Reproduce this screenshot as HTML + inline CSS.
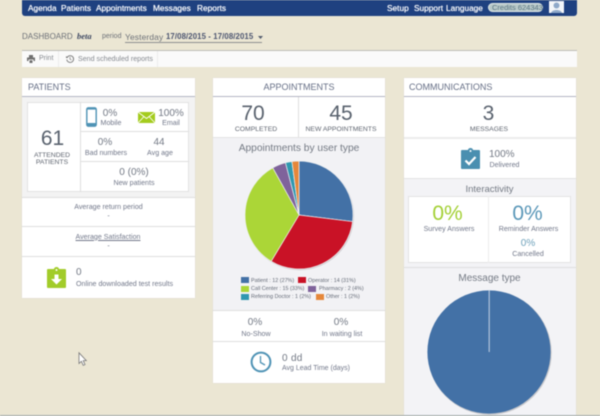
<!DOCTYPE html>
<html><head><meta charset="utf-8"><style>
html,body{margin:0;padding:0;width:600px;height:416px;overflow:hidden;background:#ebe6d3}
#r{position:relative;width:600px;height:416px;overflow:hidden;background:#ebe6d3;font-family:"Liberation Sans",Arial,sans-serif;color:#72788a;filter:blur(.42px)}
.t{position:absolute;line-height:0;white-space:nowrap;font-size:7.1px;margin-top:1.2px}
.c{transform:translateX(-50%)}
.b{position:absolute;box-sizing:border-box}
.n{color:#fff;font-size:8.3px;text-shadow:0 0 .6px #fff;top:7px}
.h{font-size:9px;color:#666f86;top:86px}
.p{background:#fff;position:absolute;box-shadow:0 0 1px #cfcfcf}
.l{position:absolute;height:1px;background:#dfdfdf}
.v{position:absolute;width:1px;background:#dfdfdf}
.big{font-size:21px;color:#59626e}
.m{font-size:10px;color:#737985}
.up{font-size:6.8px;color:#5f6570}
.s{position:absolute;width:8px;height:6px}
.g{font-size:5.4px;color:#666c78}
svg{position:absolute;overflow:visible}
</style></head><body><div id="r">

<div class="b" style="left:22px;top:0;width:555px;height:16px;background:#1f4180;border-radius:0 0 3px 3px"></div>
<span class="t n" style="left:28px">Agenda</span>
<span class="t n" style="left:61px">Patients</span>
<span class="t n" style="left:96px">Appointments</span>
<span class="t n" style="left:153px">Messages</span>
<span class="t n" style="left:197px">Reports</span>
<span class="t n" style="left:387px">Setup</span>
<span class="t n" style="left:414px">Support</span>
<span class="t n" style="left:446px">Language</span>
<div class="b" style="left:488px;top:3px;width:55px;height:9px;border-radius:5px;background:#b9c9c9;border:1px solid #dfe7e7"></div>
<span class="t" style="left:492px;top:6.5px;font-size:7.5px;color:#5b7784">Credits 624343</span>
<div class="b" style="left:549px;top:1px;width:15px;height:12px;background:#f4f6f9;overflow:hidden">
<svg width="15" height="12" style="left:0;top:0"><circle cx="7.5" cy="4.5" r="3" fill="#8fa9c9"/><path d="M2 12 C3 8 12 8 13 12Z" fill="#8fa9c9"/></svg></div>

<span class="t" style="left:22px;top:35.5px;font-size:8px;color:#6d7178">DASHBOARD</span>
<span class="t" style="left:77px;top:34.5px;font-size:8.5px;font-family:'Liberation Serif',serif;font-style:italic;font-weight:bold;color:#3c4660">beta</span>
<span class="t" style="left:102px;top:36px;font-size:7px;color:#6d7178">period</span>
<span class="t" style="left:125px;top:36px;font-size:8.4px;color:#6d7178;letter-spacing:.15px">Yesterday</span>
<span class="t" style="left:166px;top:35.5px;font-size:7.8px;font-weight:bold;color:#4c5570;letter-spacing:.1px">17/08/2015 - 17/08/2015</span>
<svg style="left:258px;top:36px" width="5" height="3"><path d="M0 0H5L2.5 3Z" fill="#555e70"/></svg>
<div class="b" style="left:125px;top:42px;width:137px;height:1px;background:#8d8f90"></div>

<div class="b" style="left:22px;top:50px;width:555px;height:17px;background:#fafafa;border-top:1px solid #bdbdb8"></div>
<div class="v" style="left:58px;top:51px;height:16px;background:#ececec"></div>
<div class="v" style="left:157px;top:51px;height:16px;background:#ececec"></div>
<svg style="left:27px;top:54.5px" width="8" height="8"><path d="M2 0H6V2.5H2ZM0 2.5H8V6H6.5V4.5H1.5V6H0ZM2.5 5.2H5.5V8H2.5Z" fill="#707070"/></svg>
<span class="t" style="left:39px;top:57.5px;font-size:7px;color:#868a90">Print</span>
<svg style="left:66px;top:54.5px" width="8" height="8"><path d="M1.2 2.4A3.4 3.4 0 1 1 .8 4.5" fill="none" stroke="#777" stroke-width=".9"/><path d="M4 2V4.2L5.5 5" fill="none" stroke="#777" stroke-width=".7"/><path d="M0 1V3H2Z" fill="#777"/></svg>
<span class="t" style="left:78px;top:57.5px;font-size:7.1px;color:#868a90">Send scheduled reports</span>

<!-- PATIENTS -->
<div class="p" style="left:22px;top:78px;width:173px;height:220px"></div>
<span class="t h" style="left:28px">PATIENTS</span>
<div class="l" style="left:22px;top:96px;width:173px;background:#b4b6c4"></div>
<div class="b" style="left:22px;top:97px;width:173px;height:100px;background:#f3f3f3"></div>
<div class="b" style="left:27px;top:102px;width:162px;height:90px;background:#fff;border:1px solid #e2e2e2"></div>
<div class="v" style="left:80px;top:102px;height:90px"></div>
<div class="l" style="left:80px;top:131px;width:109px"></div>
<div class="l" style="left:80px;top:161px;width:109px"></div>
<div class="l" style="left:22px;top:197px;width:173px"></div>
<div class="l" style="left:22px;top:226px;width:173px"></div>
<div class="l" style="left:22px;top:256px;width:173px"></div>

<span class="t c big" style="left:52.5px;top:138px">61</span>
<span class="t c up" style="left:52px;top:154.5px">ATTENDED</span>
<span class="t c up" style="left:52px;top:161.5px">PATIENTS</span>

<svg style="left:86px;top:107px" width="11" height="20"><rect x=".8" y=".8" width="9.4" height="18.4" rx="1.6" fill="#fff" stroke="#4f93b5" stroke-width="1.4"/><rect x="1" y="16" width="9" height="3.5" fill="#4f93b5"/><rect x="1" y="1" width="9" height="1.6" fill="#4f93b5"/></svg>
<span class="t c m" style="left:110px;top:112.5px">0%</span>
<span class="t c" style="left:111px;top:122px">Mobile</span>
<svg style="left:138px;top:112px" width="17" height="11"><path d="M0 0H17V11H0Z" fill="#a4cc1e"/><path d="M0 0L8.5 6.5L17 0M0 11L6 4.5M17 11L11 4.5" fill="none" stroke="#fff" stroke-width=".9"/></svg>
<span class="t c m" style="left:171px;top:112.5px">100%</span>
<span class="t c" style="left:171px;top:122px">Email</span>
<span class="t c m" style="left:105px;top:142px">0%</span>
<span class="t c" style="left:106px;top:152px">Bad numbers</span>
<span class="t c m" style="left:159px;top:142px">44</span>
<span class="t c" style="left:160px;top:152px">Avg age</span>
<span class="t c m" style="left:134px;top:172px">0 (0%)</span>
<span class="t c" style="left:134px;top:182px">New patients</span>

<span class="t c" style="left:108.5px;top:205.5px">Average return period</span>
<span class="t c" style="left:108.5px;top:214.5px">-</span>
<span class="t c" style="left:108px;top:235.5px;text-decoration:underline">Average Satisfaction</span>
<span class="t c" style="left:108.5px;top:244.5px">-</span>
<svg style="left:47px;top:267px" width="19" height="21"><path d="M1 2H7A2.5 2 0 0 1 12 2H18A1 1 0 0 1 19 3V20A1 1 0 0 1 18 21H1A1 1 0 0 1 0 20V3A1 1 0 0 1 1 2Z" fill="#a2cc2a"/><circle cx="9.5" cy="3" r="1" fill="#fff"/><path d="M7.5 7.5H11.5V12H15L9.5 17.5L4 12H7.5Z" fill="#fff"/></svg>
<span class="t m" style="left:76px;top:272px">0</span>
<span class="t" style="left:76px;top:282.5px;font-size:7.1px">Online downloaded test results</span>

<!-- APPOINTMENTS -->
<div class="p" style="left:213px;top:78px;width:172px;height:305px"></div>
<span class="t h c" style="left:299px">APPOINTMENTS</span>
<div class="l" style="left:213px;top:96px;width:172px;background:#b4b6c4"></div>
<div class="v" style="left:298px;top:97px;height:40px"></div>
<span class="t c big" style="left:253px;top:113px">70</span>
<span class="t c up" style="left:256px;top:128.5px">COMPLETED</span>
<span class="t c big" style="left:341px;top:113px">45</span>
<span class="t c up" style="left:341px;top:128.5px">NEW APPOINTMENTS</span>
<div class="b" style="left:213px;top:137px;width:172px;height:174px;background:#f2f2f5;border-top:1px solid #e4e4e4;border-bottom:1px solid #dfdfdf"></div>
<span class="t c" style="left:299px;top:148px;font-size:10.2px;color:#747a84">Appointments by user type</span>
<svg style="left:299px;top:215px" width="1" height="1">
<circle cx=".6" cy=".8" r="54.4" fill="#cfcfd2"/>
<g stroke="#eef0f2" stroke-width=".7">
<path d="M0 0V-54A54 54 0 0 1 53.6 6.58Z" fill="#4371a6"/>
<path d="M0 0L53.6 6.58A54 54 0 0 1 -27.8 46.3Z" fill="#c91226"/>
<path d="M0 0L-27.8 46.3A54 54 0 0 1 -26.2 -47.2Z" fill="#abd637"/>
<path d="M0 0L-26.2 -47.2A54 54 0 0 1 -13.5 -52.3Z" fill="#7f639b"/>
<path d="M0 0L-13.5 -52.3A54 54 0 0 1 -7.05 -53.5Z" fill="#2f98b0"/>
<path d="M0 0L-7.05 -53.5A54 54 0 0 1 0 -54Z" fill="#e5873a"/>
</g></svg>
<div class="s" style="left:241px;top:277px;background:#4371a6"></div><span class="t g" style="left:251px;top:279.5px">Patient : 12 (27%)</span>
<div class="s" style="left:298px;top:277px;background:#c91226"></div><span class="t g" style="left:308px;top:279.5px">Operator : 14 (31%)</span>
<div class="s" style="left:241px;top:285.5px;background:#abd637"></div><span class="t g" style="left:251px;top:288px">Call Center : 15 (33%)</span>
<div class="s" style="left:308px;top:285.5px;background:#7f639b"></div><span class="t g" style="left:319px;top:288px">Pharmacy : 2 (4%)</span>
<div class="s" style="left:241px;top:293.5px;background:#2f98b0"></div><span class="t g" style="left:251px;top:296px">Referring Doctor : 1 (2%)</span>
<div class="s" style="left:315.5px;top:293.5px;background:#e5873a"></div><span class="t g" style="left:326px;top:296px">Other : 1 (2%)</span>

<span class="t c m" style="left:255px;top:322px">0%</span>
<span class="t c" style="left:256px;top:332.5px">No-Show</span>
<span class="t c m" style="left:341px;top:322px">0%</span>
<span class="t c" style="left:342px;top:332.5px">In waiting list</span>
<div class="l" style="left:213px;top:341px;width:172px"></div>
<svg style="left:250px;top:351px" width="22" height="22"><circle cx="11" cy="11" r="9.4" fill="#fff" stroke="#4f93b5" stroke-width="2"/><path d="M10.5 5V11.5L15 14" fill="none" stroke="#4f93b5" stroke-width="1.3"/></svg>
<span class="t" style="left:282px;top:357.5px;font-size:10px;color:#737985;letter-spacing:.3px">0 dd</span>
<span class="t" style="left:282px;top:367.5px;font-size:7px">Avg Lead Time (days)</span>

<!-- COMMUNICATIONS -->
<div class="p" style="left:404px;top:78px;width:172px;height:338px"></div>
<span class="t h" style="left:409px">COMMUNICATIONS</span>
<div class="l" style="left:404px;top:96px;width:172px;background:#b4b6c4"></div>
<span class="t c big" style="left:488.5px;top:113px">3</span>
<span class="t c up" style="left:489px;top:128.5px">MESSAGES</span>
<div class="l" style="left:404px;top:137px;width:172px;height:2px;background:#ececec"></div>
<svg style="left:461px;top:148px" width="19" height="21"><path d="M1 2H7A2.5 2 0 0 1 12 2H18A1 1 0 0 1 19 3V20A1 1 0 0 1 18 21H1A1 1 0 0 1 0 20V3A1 1 0 0 1 1 2Z" fill="#4a8fb0"/><circle cx="9.5" cy="3" r="1" fill="#fff"/><path d="M4.5 12.5L8 16L14.5 9" fill="none" stroke="#fff" stroke-width="2.2"/></svg>
<span class="t" style="left:489px;top:154px;font-size:10px;color:#737985">100%</span>
<span class="t" style="left:489.5px;top:164px">Delivered</span>

<div class="b" style="left:404px;top:178px;width:172px;height:238px;background:#f3f3f6;border-top:1px solid #e4e4e4"></div>
<span class="t c" style="left:489.5px;top:189px;font-size:9.5px;color:#747a84">Interactivity</span>
<div class="b" style="left:408px;top:196px;width:163px;height:67px;background:#fff;border:1px solid #e4e4e4"></div>
<div class="v" style="left:488px;top:196px;height:67px;background:#ececec"></div>
<span class="t c" style="left:447.5px;top:212.5px;font-size:21px;color:#a3d034">0%</span>
<span class="t c" style="left:449px;top:228px">Survey Answers</span>
<span class="t c" style="left:527.5px;top:212.5px;font-size:21px;color:#5a97b8">0%</span>
<span class="t c" style="left:528.5px;top:228px">Reminder Answers</span>
<span class="t c" style="left:528px;top:242.5px;font-size:10px;color:#6fa2bb">0%</span>
<span class="t c" style="left:528px;top:252.5px">Cancelled</span>
<div class="l" style="left:404px;top:267px;width:172px"></div>
<span class="t c" style="left:489.5px;top:277.5px;font-size:10px;color:#747a84">Message type</span>
<svg style="left:489px;top:351.5px" width="1" height="1">
<circle cx=".7" cy=".8" r="62" fill="#c9c9cc"/>
<circle cx="0" cy="0" r="61.6" fill="#4371a6"/>
<path d="M.2 -61.6V0" stroke="#c6d3e4" stroke-width="1"/>
</svg>

<!-- bottom line -->
<div class="b" style="left:0;top:415px;width:600px;height:1px;background:#a3acb0"></div>

<!-- cursor -->
<svg style="left:78px;top:352px" width="10" height="15"><path d="M1 .8V11.5L3.4 9.3L5.2 13.4L7 12.6L5.2 8.6H8.3Z" fill="#fff" stroke="#777" stroke-width=".8"/></svg>

</div></body></html>
